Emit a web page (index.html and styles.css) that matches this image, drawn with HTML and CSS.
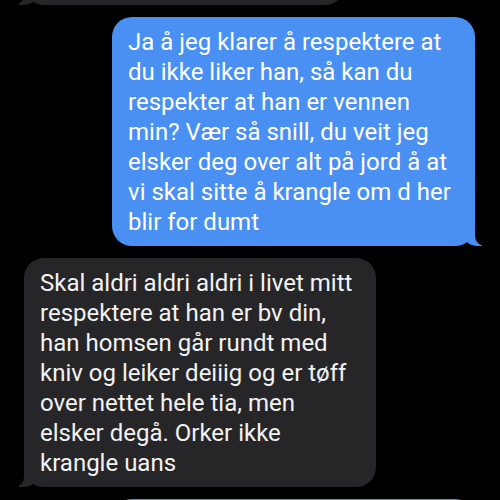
FILE: index.html
```html
<!DOCTYPE html>
<html lang="no">
<head>
  <meta charset="UTF-8" />
  <meta name="viewport" content="width=device-width, initial-scale=1" />
  <title>Meldinger</title>
  <link rel="stylesheet" href="styles.css">
</head>
<body>

  <div class="samtale">
    <!-- forrige melding, rullet nesten ut av skjermen -->
    <div class="boble mottatt forrige"></div>

    <div class="boble sendt">
      Ja å jeg klarer å respektere at<br>
      du ikke liker han, så kan du<br>
      respekter at han er vennen<br>
      min? Vær så snill, du veit jeg<br>
      elsker deg over alt på jord å at<br>
      vi skal sitte å krangle om d her<br>
      blir for dumt
    </div>

    <div class="boble mottatt">
      Skal aldri aldri aldri i livet mitt<br>
      respektere at han er bv din,<br>
      han homsen går rundt med<br>
      kniv og leiker deiiig og er tøff<br>
      over nettet hele tia, men<br>
      elsker degå. Orker ikke<br>
      krangle uans
    </div>

    <!-- neste melding, starter nederst -->
    <div class="boble sendt neste"></div>
  </div>

</body>
</html>
```

FILE: styles.css
```css
:root {
  --bakgrunn: #000000;
  --blaa: #4a8ff2;
  --graa: #262629;
  --tekst: #ffffff;
}

* {
  margin: 0;
  padding: 0;
  box-sizing: border-box;
}

body {
  background: var(--bakgrunn);
  font-family: 'Roboto', 'Liberation Sans', sans-serif;
  height: 500px;
  overflow: hidden;
}

.samtale {
  display: flex;
  flex-direction: column;
  gap: 12px;
  padding: 0 25px 0 24px;
}

.boble {
  position: relative;
  font-size: 24px;
  line-height: 30px;
  white-space: nowrap;
  color: var(--tekst);
  padding: 10px 16px 9px 16px;
  border-radius: 20px;
}

/* Halen på boblene */
.boble::before,
.boble::after {
  content: '';
  position: absolute;
  bottom: 0;
  height: 20px;
}

.sendt {
  align-self: flex-end;
  width: 363px;
  background: var(--blaa);
}

.sendt::before {
  right: -7px;
  width: 20px;
  background: var(--blaa);
  border-bottom-left-radius: 16px 14px;
}

.sendt::after {
  right: -26px;
  width: 26px;
  background: var(--bakgrunn);
  border-bottom-left-radius: 10px;
}

.mottatt {
  align-self: flex-start;
  width: 352px;
  background: var(--graa);
  color: #f2f2f2;
}

.mottatt::before {
  left: -5px;
  width: 20px;
  background: var(--graa);
  border-bottom-right-radius: 16px 14px;
}

.mottatt::after {
  left: -26px;
  width: 26px;
  background: var(--bakgrunn);
  border-bottom-right-radius: 10px;
}

.forrige {
  width: 321px;
  height: 60px;
  margin-top: -55px;
}

.neste {
  height: 60px;
}
```
